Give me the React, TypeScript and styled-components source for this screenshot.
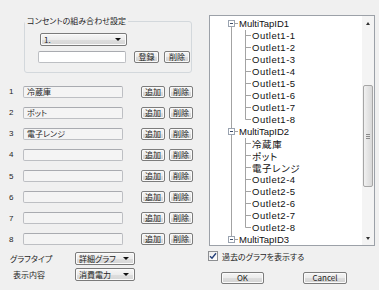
import React from "react";
import styled, { createGlobalStyle } from "styled-components";

const GlobalStyle = createGlobalStyle`
  html, body {
    margin: 0;
    padding: 0;
    background: #f0f0f0;
  }
  body {
    font-family: "Noto Sans CJK JP", "Noto Sans", sans-serif;
    overflow: hidden;
  }
`;

const Window = styled.div`
  display: flex;
  width: 379px;
  height: 290px;
  background: #f0f0f0;
  color: #1e1e1e;
  font-size: 8px;
  font-feature-settings: "palt";
`;

const LeftColumn = styled.div`
  width: 209px;
  flex: none;
  display: flex;
  flex-direction: column;
`;

const GroupBox = styled.fieldset`
  margin: 15px 0 0 24px;
  width: 168px;
  box-sizing: border-box;
  min-width: 0;
  padding: 6px 0 9px 0;
  border: 1px solid #d3d8dc;
  border-radius: 3px;
`;

const GroupTitle = styled.legend`
  margin-left: 0;
  padding: 0 2px;
  line-height: 12px;
  font-size: 8px;
`;

const GroupContent = styled.div`
  display: flex;
  flex-direction: column;
  gap: 5px;
  padding-left: 13px;
`;

const InlineRow = styled.div`
  display: flex;
  align-items: center;
`;

const ComboBox = styled.div<{ $width: number; $offset?: number }>`
  width: ${({ $width }) => $width}px;
  height: 13px;
  margin-left: ${({ $offset }) => $offset ?? 0}px;
  box-sizing: border-box;
  display: flex;
  align-items: center;
  justify-content: space-between;
  padding: 0 5px 0 3px;
  border: 1px solid #7a7a7a;
  border-radius: 2px;
  background: linear-gradient(#f6f6f6 0%, #ececec 50%, #dedede 51%, #d6d6d6 100%);
  box-shadow: inset 0 0 0 1px #fbfbfb;
  line-height: 11px;
`;

const DropArrow = styled.span`
  width: 0;
  height: 0;
  border-left: 3px solid transparent;
  border-right: 3px solid transparent;
  border-top: 3px solid #111;
`;

const TextBox = styled.div<{ $width: number; $light?: boolean }>`
  width: ${({ $width }) => $width}px;
  height: 12px;
  box-sizing: border-box;
  border: 1px solid #bdbfc3;
  border-top-color: #a9abb0;
  border-radius: 2px;
  background: ${({ $light }) => ($light ? "#ffffff" : "#f4f4f4")};
  padding-left: 3px;
  line-height: 10px;
  font-size: 8px;
`;

const PushButton = styled.button<{ $width: number; $gap?: number }>`
  width: ${({ $width }) => $width}px;
  height: 12px;
  margin-left: ${({ $gap }) => $gap ?? 0}px;
  padding: 0;
  box-sizing: border-box;
  border: 1px solid #7c7c7c;
  border-radius: 2px;
  background: linear-gradient(#f4f4f4 0%, #ebebeb 50%, #dddddd 51%, #d2d2d2 100%);
  box-shadow: inset 0 0 0 1px #fafafa;
  font-family: "Noto Sans CJK JP", "Noto Sans", sans-serif;
  font-feature-settings: "palt";
  font-size: 8px;
  line-height: 10px;
  color: #1e1e1e;
`;

const SlotList = styled.div`
  display: flex;
  flex-direction: column;
  gap: 8.15px;
  margin-top: 12px;
`;

const SlotRow = styled.div`
  display: flex;
  align-items: center;
  height: 13px;
`;

const SlotNumber = styled.span`
  width: 14px;
  padding-left: 9px;
  font-family: "Liberation Sans", sans-serif;
  font-size: 8px;
`;

const OptionGrid = styled.div`
  display: grid;
  grid-template-columns: 65px 60px;
  row-gap: 3px;
  align-items: center;
  margin-top: 6px;
  padding-left: 10px;
`;

const OptionLabel = styled.span<{ $indent?: number }>`
  padding-left: ${({ $indent }) => $indent ?? 0}px;
`;

const RightColumn = styled.div`
  width: 166px;
  flex: none;
  display: flex;
  flex-direction: column;
`;

const TreeBox = styled.div`
  margin-top: 15px;
  height: 231px;
  box-sizing: border-box;
  border: 1px solid #9ca1a8;
  background: #fff;
  display: flex;
  overflow: hidden;
`;

const TreeList = styled.div`
  flex: 1;
  padding-top: 2px;
  overflow: hidden;
`;

const TreeRow = styled.div`
  display: flex;
  align-items: center;
  height: 12px;
  white-space: nowrap;
`;

const TreeText = styled.span<{ $kind: "node" | "outlet" | "jp" }>`
  font-family: ${({ $kind }) =>
    $kind === "jp" ? '"Noto Sans CJK JP", sans-serif' : '"Liberation Sans", sans-serif'};
  font-size: ${({ $kind }) => ($kind === "jp" ? "9.5px" : "9.5px")};
  letter-spacing: ${({ $kind }) => ($kind === "outlet" ? "0.5px" : $kind === "jp" ? "0.6px" : "0")};
  line-height: 12px;
  color: #111;
`;

const ScrollBar = styled.div`
  width: 12px;
  flex: none;
  display: flex;
  flex-direction: column;
  align-items: center;
  background: #f4f4f4;
`;

const ScrollArrow = styled.div<{ $up?: boolean }>`
  height: 14px;
  width: 12px;
  flex: none;
  display: flex;
  align-items: center;
  justify-content: center;
  &::after {
    content: "";
    border-left: 2.5px solid transparent;
    border-right: 2.5px solid transparent;
    ${({ $up }) => ($up ? "border-bottom: 3px solid #333;" : "border-top: 3px solid #333;")}
  }
`;

const ScrollTrack = styled.div`
  flex: 1;
  display: flex;
  flex-direction: column;
  align-items: center;
`;

const ScrollThumb = styled.div`
  width: 10px;
  box-sizing: border-box;
  border: 1px solid #a6a6a6;
  border-radius: 2px;
  background: linear-gradient(90deg, #f1f1f1, #e4e4e4 50%, #d9d9d9);
  display: flex;
  flex-direction: column;
  align-items: center;
  justify-content: center;
  gap: 1px;
`;

const GripLine = styled.span`
  width: 4px;
  height: 1px;
  background: #8a8a8a;
`;

const CheckRow = styled.label`
  display: flex;
  align-items: center;
  gap: 4px;
  margin-top: 5px;
  margin-left: -1px;
  height: 10px;
`;

const CheckBox = styled.span`
  width: 10px;
  height: 10px;
  box-sizing: border-box;
  border: 1px solid #8d8f92;
  background: linear-gradient(135deg, #ececec, #ffffff);
  display: flex;
  align-items: center;
  justify-content: center;
`;

const DialogButtons = styled.div`
  display: flex;
  margin-top: 11px;
  padding-left: 12px;
`;

type TreeItem = {
  label: string;
  level: 0 | 1;
  kind: "node" | "outlet" | "jp";
  first?: boolean;
  last?: boolean;
  parentHasNext?: boolean;
};

const outlets = (tap: number, from: number): TreeItem[] =>
  Array.from({ length: 9 - from }, (_, i) => ({
    label: `Outlet${tap}-${from + i}`,
    level: 1 as const,
    kind: "outlet" as const,
    last: from + i === 8,
    parentHasNext: true,
  }));

const treeItems: TreeItem[] = [
  { label: "MultiTapID1", level: 0, kind: "node", first: true },
  ...outlets(1, 1),
  { label: "MultiTapID2", level: 0, kind: "node" },
  { label: "冷蔵庫", level: 1, kind: "jp", parentHasNext: true },
  { label: "ポット", level: 1, kind: "jp", parentHasNext: true },
  { label: "電子レンジ", level: 1, kind: "jp", parentHasNext: true },
  ...outlets(2, 4),
  { label: "MultiTapID3", level: 0, kind: "node", last: true },
];

const LINE = "#a3a3a3";

const TreeGuide: React.FC<{ item: TreeItem }> = ({ item }) => {
  if (item.level === 0) {
    return (
      <svg width="29" height="12" viewBox="0 0 29 12">
        <line x1="21.5" y1={item.first ? 5.5 : 0} x2="21.5" y2={item.last ? 5.5 : 12} stroke={LINE} />
        <line x1="25" y1="5.5" x2="28" y2="5.5" stroke={LINE} />
        <rect x="18.5" y="2.5" width="6" height="6" fill="#fff" stroke="#9aa3b0" />
        <line x1="20" y1="5.5" x2="23" y2="5.5" stroke="#3d4d6a" />
      </svg>
    );
  }
  return (
    <svg width="42" height="12" viewBox="0 0 42 12">
      {item.parentHasNext && <line x1="21.5" y1="0" x2="21.5" y2="12" stroke={LINE} />}
      <line x1="35.5" y1="0" x2="35.5" y2={item.last ? 5.5 : 12} stroke={LINE} />
      <line x1="35.5" y1="5.5" x2="41" y2="5.5" stroke={LINE} />
    </svg>
  );
};

const slots = ["冷蔵庫", "ポット", "電子レンジ", "", "", "", "", ""];

const App: React.FC = () => {
  return (
    <>
      <GlobalStyle />
      <Window>
        <LeftColumn>
          <GroupBox>
            <GroupTitle>コンセントの組み合わせ設定</GroupTitle>
            <GroupContent>
              <ComboBox $width={87} $offset={2}>
                <span>1.</span>
                <DropArrow />
              </ComboBox>
              <InlineRow>
                <TextBox $width={88} $light />
                <PushButton $width={25} $gap={8}>登録</PushButton>
                <PushButton $width={26} $gap={5}>削除</PushButton>
              </InlineRow>
            </GroupContent>
          </GroupBox>

          <SlotList>
            {slots.map((name, i) => (
              <SlotRow key={i}>
                <SlotNumber>{i + 1}</SlotNumber>
                <TextBox $width={100}>{name}</TextBox>
                <PushButton $width={24} $gap={18}>追加</PushButton>
                <PushButton $width={24} $gap={4}>削除</PushButton>
              </SlotRow>
            ))}
          </SlotList>

          <OptionGrid>
            <OptionLabel>グラフタイプ</OptionLabel>
            <ComboBox $width={60}>
              <span>詳細グラフ</span>
              <DropArrow />
            </ComboBox>
            <OptionLabel $indent={3}>表示内容</OptionLabel>
            <ComboBox $width={60}>
              <span>消費電力</span>
              <DropArrow />
            </ComboBox>
          </OptionGrid>
        </LeftColumn>

        <RightColumn>
          <TreeBox>
            <TreeList>
              {treeItems.map((item) => (
                <TreeRow key={item.label}>
                  <TreeGuide item={item} />
                  <TreeText $kind={item.kind}>{item.label}</TreeText>
                </TreeRow>
              ))}
            </TreeList>
            <ScrollBar>
              <ScrollArrow $up />
              <ScrollTrack>
                <ScrollThumb style={{ marginTop: 55, height: 102 }}>
                  <GripLine />
                  <GripLine />
                  <GripLine />
                </ScrollThumb>
              </ScrollTrack>
              <ScrollArrow />
            </ScrollBar>
          </TreeBox>

          <CheckRow>
            <CheckBox>
              <svg width="8" height="8" viewBox="0 0 8 8">
                <path d="M1 4.2 L3 6.3 L7 1.2" fill="none" stroke="#25407a" strokeWidth="1.4" />
              </svg>
            </CheckBox>
            <span>過去のグラフを表示する</span>
          </CheckRow>

          <DialogButtons>
            <PushButton $width={43}>OK</PushButton>
            <PushButton $width={44} $gap={39}>Cancel</PushButton>
          </DialogButtons>
        </RightColumn>
      </Window>
    </>
  );
};

export default App;
